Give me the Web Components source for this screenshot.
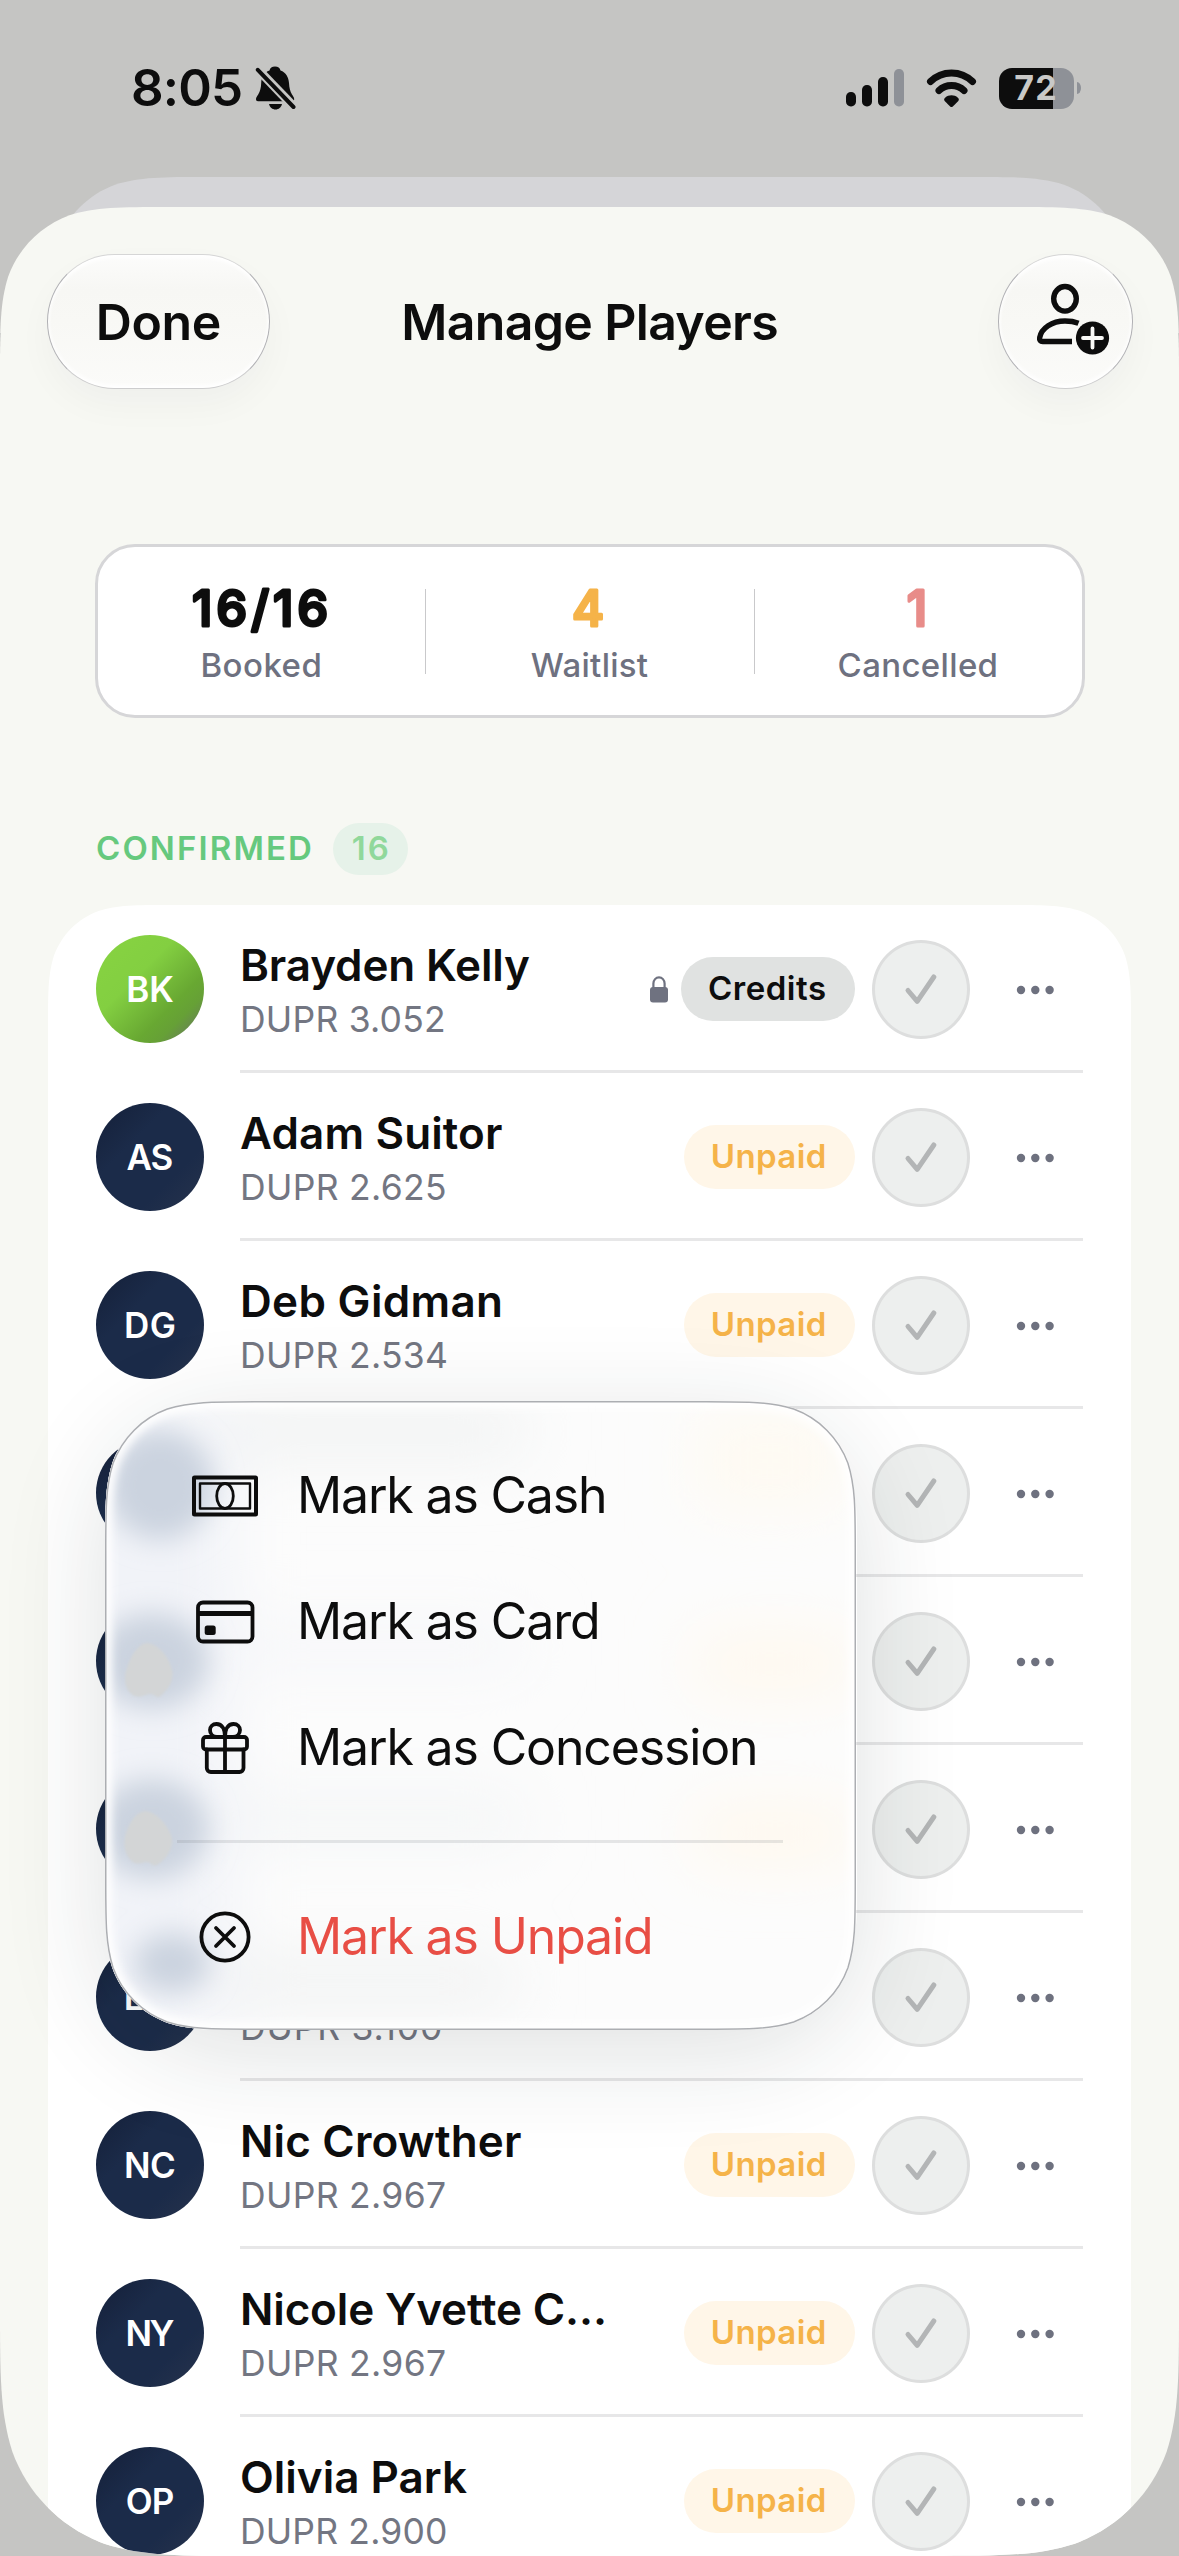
<!DOCTYPE html>
<html lang="en">
<head>
<meta charset="utf-8">
<title>Manage Players</title>
<style>
  html, body { margin: 0; height: 100%; }
  body { width: 1179px; height: 2556px; overflow: hidden; background: #c5c5c3; color: #0d0d0d; font-family: Inter, "Liberation Sans", sans-serif; }
</style>
</head>
<body>
<manage-players-screen></manage-players-screen>

<script>
/* Builds a continuous-curvature rounded rectangle path: rt = top radius, rb = bottom radius. */
function squircle(x, y, w, h, rt, rb = rt) {
  const a = 1.5286, b = 1.0885, c = .8684, d = .6315, e = .0749, f = .3728, g = .1691;
  const X = x + w, Y = y + h;
  const p = (u, v) => u.toFixed(2) + ' ' + v.toFixed(2);
  const corner = (m) => `C ${m(b,0)} ${m(c,0)} ${m(d,e)} C ${m(f,g)} ${m(g,f)} ${m(e,d)} C ${m(0,c)} ${m(0,b)} ${m(0,a)}`;
  const back = (m) => `C ${m(0,b)} ${m(0,c)} ${m(e,d)} C ${m(g,f)} ${m(f,g)} ${m(d,e)} C ${m(c,0)} ${m(b,0)} ${m(a,0)}`;
  const tl = (u, v) => p(x + u * rt, y + v * rt), tr = (u, v) => p(X - u * rt, y + v * rt);
  const bl = (u, v) => p(x + u * rb, Y - v * rb), br = (u, v) => p(X - u * rb, Y - v * rb);
  return `M ${tl(0,a)} ${back(tl)} L ${tr(a,0)} ${corner(tr)} L ${br(0,a)} ${back(br)} L ${bl(a,0)} ${corner(bl)} Z`;
}

class BaseElement extends HTMLElement {
  connectedCallback() {
    if (this.shadowRoot) return;
    this.attachShadow({ mode: 'open' }).innerHTML = this.render();
    this.ready();
  }
  ready() {}
}

/* One line of text whose tracking is adjusted to a given ink width. */
class FitText extends BaseElement {
  render() {
    return `<style>:host{display:block;white-space:nowrap;line-height:1.2}span{display:inline-block}</style><span><slot></slot></span>`;
  }
  ready() {
    const want = +this.getAttribute('w'), text = this.textContent;
    if (!want || text.length < 2) return;
    const cs = getComputedStyle(this), ctx = document.createElement('canvas').getContext('2d');
    ctx.font = `${cs.fontWeight} ${cs.fontSize} ${cs.fontFamily}`;
    const m = ctx.measureText(text);
    const ls = (want - (m.actualBoundingBoxLeft + m.actualBoundingBoxRight)) / (text.length - 1);
    const span = this.shadowRoot.querySelector('span');
    span.style.letterSpacing = ls.toFixed(3) + 'px';
    span.style.marginRight = (-ls).toFixed(3) + 'px';
  }
}
customElements.define('fit-text', FitText);

class StatusBar extends BaseElement {
  render() {
    return `<style>
      :host{display:flex;height:176px;align-items:center;justify-content:space-between;padding:0 98px 0 131px}
      .l,.r{display:flex;align-items:center}
      fit-text{font-size:51px;font-weight:600}
      .l svg{margin-left:12px}
      .r svg{display:block}
      .bars{margin-right:22px}.wifi{margin-right:22px}
      .bat{display:flex;align-items:center}
      .cell{width:75px;height:41px;border-radius:13px;background:linear-gradient(90deg,#0d0d0d 54.5px,#8e9197 54.5px);display:flex;align-items:center;justify-content:center;color:#c9c9c7}
      .cell fit-text{font-size:34px;font-weight:700;margin-left:-2px}
      .nub{width:4px;height:12px;margin-left:3px;border-radius:0 4px 4px 0/0 6px 6px 0;background:#8e9197}
    </style>
    <div class="l"><fit-text w="108">8:05</fit-text>
      <svg width="41" height="44" viewBox="0 0 41 44">
        <path d="M20 .5c3 0 5 1.600 5.500 4C31 6.500 33.500 11 34 17c.3 5 1 8 3 11.500 1.200 2 2.200 3 2.200 4.700 0 1.300-.8 2-2 2H3c-1.300 0-2-.7-2-2 0-1.700 1-2.700 2.200-4.700C5.200 25 6 22 6.200 17 6.500 11 9 6.500 14.500 4.500 15 2 17 .5 20 .5Z" fill="#0d0d0d"/>
        <path d="M14 38h13c-.8 3.400-3.300 5.500-6.500 5.500S14.800 41.400 14 38Z" fill="#0d0d0d"/>
        <path d="M3 3.500 39 41" stroke="#c5c5c3" stroke-width="9"/>
        <path d="M2.800 3.800 38.500 41" stroke="#0d0d0d" stroke-width="4" stroke-linecap="round"/>
      </svg></div>
    <div class="r">
      <svg class="bars" width="58" height="38" viewBox="0 0 58 38"><rect x="0" y="23" width="10" height="14.500" rx="4.800" fill="#0d0d0d"/><rect x="16" y="16" width="10" height="21.500" rx="4.800" fill="#0d0d0d"/><rect x="32" y="8" width="10" height="29.500" rx="4.800" fill="#0d0d0d"/><rect x="48" y="0" width="10" height="37.500" rx="4.800" fill="#8e9197"/></svg>
      <svg class="wifi" width="51" height="38" viewBox="0 0 51 38"><g fill="none" stroke="#0d0d0d" stroke-width="7" stroke-linecap="round"><path d="M4.500 12.500C16 1 35 1 46.500 12.500"/><path d="M13 21.500c7-6.700 18-6.700 25 0"/></g><path d="M25.500 38c-.8 0-1.200-.4-6.600-5.800-1.200-1.200-.9-2.600.2-3.500 3.700-3.200 9.100-3.200 12.800 0 1.100.9 1.400 2.300.2 3.500-5.400 5.400-5.800 5.800-6.600 5.800Z" fill="#0d0d0d"/></svg>
      <div class="bat"><div class="cell"><fit-text w="40">72</fit-text></div><div class="nub"></div></div>
    </div>`;
  }
}
customElements.define('status-bar', StatusBar);

class GlassButton extends BaseElement {
  render() {
    return `<style>
      :host{display:flex;align-items:center;justify-content:center;box-sizing:border-box;height:135px;width:var(--w);border-radius:68px;border:1.500px solid #b0b0b4;border-top-color:#d6d6d6;border-bottom-color:#cdcdce;
        background:linear-gradient(#fcfcfb,#f7f7f4 26%,#f8f8f5 50%,#fbfbf9 100%);box-shadow:inset 0 3px 4px #fff,inset 0 -3px 4px #fff,0 16px 36px rgba(40,40,50,.035)}
    </style><slot></slot>`;
  }
}
customElements.define('glass-button', GlassButton);

class NavBar extends BaseElement {
  render() {
    return `<style>
      :host{display:grid;grid-template-columns:1fr auto 1fr;align-items:center;padding:46px 46px 0 47px;height:136px}
      fit-text{font-size:50px;font-weight:600;margin-top:2px}
      .end{justify-self:end}
    </style>
    <glass-button style="--w:223px"><fit-text w="121">Done</fit-text></glass-button>
    <fit-text w="373">Manage Players</fit-text>
    <glass-button class="end" style="--w:135px">
      <svg width="100" height="100" viewBox="1016 271 100 100">
        <g fill="none" stroke="#0d0d0d" stroke-width="5.400" stroke-linecap="butt" stroke-linejoin="round">
          <ellipse cx="1065" cy="298.800" rx="11.300" ry="12.300"/>
          <path d="M1078.500 323.300C1074 321.500 1069.500 321 1065 321c-13 0-23.500 7-25.300 16.500-.5 2.700.8 4 3 4H1072"/>
        </g>
        <circle cx="1092.500" cy="338" r="16.600" fill="#0d0d0d"/>
        <path d="M1083 338h19M1092.500 328.500v19" stroke="#f9f9f7" stroke-width="3.800" stroke-linecap="round"/>
      </svg>
    </glass-button>`;
  }
}
customElements.define('nav-bar', NavBar);

/* Figure over caption; the figure's outline gives it rounded terminals. */
class StatCell extends BaseElement {
  render() {
    const v = this.getAttribute('value'), c = this.getAttribute('color'), w = this.getAttribute('vw');
    const fit = w ? `textLength="${w}"` : '';
    return `<style>
      :host{display:flex;flex-direction:column;align-items:center;flex:1;padding-top:20px}
      svg{display:block;margin-left:-3px}
      text{font:500 49px Inter,"Liberation Sans",sans-serif}
      fit-text{font-size:33px;font-weight:500;color:#6e7180;line-height:40px;margin:-2px 0 0 -1px}
    </style>
    <svg width="240" height="80" viewBox="0 0 240 80"><text x="120" y="58.500" text-anchor="middle" ${fit} fill="${c}" stroke="${c}" stroke-width="3" stroke-linejoin="round">${v}</text></svg>
    <fit-text w="${this.getAttribute('lw')}">${this.getAttribute('label')}</fit-text>`;
  }
}
customElements.define('stat-cell', StatCell);

class StatsCard extends BaseElement {
  render() {
    return `<style>
      :host{display:flex;align-items:stretch;box-sizing:border-box;height:174px;margin:155px 94px 0 95px;
        background:#fff;border:3px solid #d6d6d8;border-radius:40px}
      i{width:1px;background:#c9c9cb;margin:42px 0 41px}
    </style>
    <stat-cell value="16/16" color="#0d0d0d" vw="136" label="Booked" lw="117"></stat-cell><i></i>
    <stat-cell value="4" color="#f5b349" label="Waitlist" lw="117"></stat-cell><i></i>
    <stat-cell value="1" color="#e88c89" label="Cancelled" lw="157"></stat-cell>`;
  }
}
customElements.define('stats-card', StatsCard);

class SectionHeader extends BaseElement {
  render() {
    return `<style>
      :host{display:flex;align-items:center;height:52px;margin:105px 0 30px 96px;font-size:33px;font-weight:600;color:#66c97e}
      .n{margin-left:21px;width:75px;height:52px;border-radius:26px;background:#e6f2e9;color:#90d89b;display:flex;align-items:center;justify-content:center}
    </style>
    <fit-text w="214">CONFIRMED</fit-text><div class="n"><fit-text w="35">16</fit-text></div>`;
  }
}
customElements.define('section-header', SectionHeader);

class PlayerRow extends BaseElement {
  render() {
    const g = (k) => this.getAttribute(k) || '';
    const pill = g('status');
    const green = this.hasAttribute('green');
    return `<style>
      :host{display:flex;height:168px;padding-left:48px}
      .av{flex:none;width:108px;height:108px;margin:30px 36px 0 0;border-radius:50%;display:flex;align-items:center;justify-content:center;color:#fff;font-size:35px;font-weight:600;
        background:${green ? 'linear-gradient(135deg,#86d241 12%,#83cf41 38%,#68a832 68%,#66a036 78%,#6a6b70 100%)' : 'linear-gradient(135deg,#141f38,#1b2b49 35%,#1b2b49 70%,#27334c)'}}
      .body{flex:1;display:flex;box-sizing:border-box;height:168px;border-bottom:3px solid #e7e7e8;margin-right:48px}
      .who{flex:1;padding:32px 0 0 0}
      .name{font-size:44px;font-weight:600;line-height:56px;height:56px}
      .sub{font-size:35.500px;font-weight:400;color:#737682;line-height:53px;height:53px}
      .acts{display:flex;align-items:center;height:168px}
      .lock{margin-right:13px;display:block}
      .pill{height:64px;box-sizing:border-box;border-radius:32px;display:flex;align-items:center;justify-content:center;font-size:33px;font-weight:600;margin-right:17px}
      .pill fit-text{margin-left:-2px}
      .Credits{width:174px;background:#e0e2e1}
      .Unpaid{width:171px;background:#fff6e8;color:#f5b349}
      .tick{width:98px;height:99px;box-sizing:border-box;border:3px solid #dddede;border-radius:50%;background:#edefee;display:flex;align-items:center;justify-content:center}
      .more{display:block;margin:2px 29px 0 46px}
    </style>
    <div class="av">${g('initials') ? `<fit-text w="${g('iw')}">${g('initials')}</fit-text>` : ''}</div>
    <div class="body">
      <div class="who">
        <div class="name">${g('name') ? `<fit-text style="line-height:56px" w="${g('nw')}">${g('name')}</fit-text>` : ''}</div>
        <div class="sub">${g('rating') ? `<fit-text style="line-height:53px" w="${g('rw') || 202}">DUPR ${g('rating')}</fit-text>` : ''}</div>
      </div>
      <div class="acts">
        ${pill === 'Credits' ? `<svg class="lock" width="18" height="27" viewBox="0 0 18 27"><rect x="0" y="11" width="18" height="15.500" rx="3" fill="#6f7280"/><path d="M3.400 12V7.500a5.600 6.200 0 0 1 11.200 0V12" fill="none" stroke="#6f7280" stroke-width="2.200"/></svg>` : ''}
        ${pill ? `<div class="pill ${pill}"><fit-text w="${pill === 'Credits' ? 116 : 112}">${pill}</fit-text></div>` : ''}
        <div class="tick"><svg width="40" height="40" viewBox="0 0 40 40"><path d="M7 21.500 16.200 32.300 32.800 8" fill="none" stroke="#b3b5b6" stroke-width="5" stroke-linecap="round" stroke-linejoin="round"/></svg></div>
        <svg class="more" width="38" height="10" viewBox="0 0 38 10" fill="#6e717f"><circle cx="5" cy="5" r="4.200"/><circle cx="19.300" cy="5" r="4.200"/><circle cx="33.600" cy="5" r="4.200"/></svg>
      </div>
    </div>`;
  }
}
customElements.define('player-row', PlayerRow);

class PlayerList extends BaseElement {
  render() {
    return `<style>
      :host{display:block;margin:0 48px;height:1651px;background:#fff;clip-path:path('${squircle(0, 0, 1083, 1800, 80)}')}
    </style><slot></slot>`;
  }
}
customElements.define('player-list', PlayerList);

class MenuItem extends BaseElement {
  render() {
    return `<style>
      :host{display:flex;align-items:center;height:126px;padding-left:80px;font-size:50px;font-weight:400}
      svg{display:block;margin-right:32px}
      fit-text{margin-top:-2px}
    </style>
    <svg width="80" height="80" viewBox="0 0 80 80" fill="none" stroke="#0d0d0d" stroke-width="4" stroke-linecap="round" stroke-linejoin="round">${MenuItem.icons[this.getAttribute('icon')]}</svg>
    <fit-text w="${this.getAttribute('w')}">${this.getAttribute('label')}</fit-text>`;
  }
}
MenuItem.icons = {
  cash: '<rect x="9" y="21.500" width="62" height="37" rx=".5"/><rect x="15" y="27.500" width="50" height="25" stroke-width="2.400"/><ellipse cx="40" cy="40" rx="8.300" ry="12.500" stroke-width="2.800"/>',
  card: '<rect x="13" y="20.500" width="54.500" height="39" rx="5" stroke-width="3.800"/><path d="M13 31.500h54.500" stroke-width="5" stroke-linecap="butt"/><rect x="19.700" y="43.500" width="11" height="9.500" rx="2.500" fill="#0d0d0d" stroke="none"/>',
  gift: '<g stroke-width="3.800"><rect x="18" y="29" width="44" height="12.500" rx="3"/><path d="M21.800 41.500V60a4 4 0 0 0 4 4H54.500a4 4 0 0 0 4-4V41.500M40 25v39"/><path d="M40 29c0-8-3-13-8.500-13-4 0-6.500 2.800-6.500 6 0 4 3 7 7 7M40 29c0-8 3-13 8.500-13 4 0 6.500 2.800 6.500 6 0 4-3 7-7 7"/></g>',
  cross: '<circle cx="40" cy="40" r="23.600" stroke-width="3.800"/><path d="M31 31l18 18M49 31 31 49" stroke-width="3.800"/>'
};
customElements.define('menu-item', MenuItem);

/* Frosted popover; soft ellipses stand for the avatars and pills diffused by the glass. */
class ContextMenu extends BaseElement {
  render() {
    const path = squircle(0, 0, 751, 629, 98), rim = squircle(.75, .75, 749.5, 627.5, 97.5);
    return `<style>
      :host{display:grid;width:752px;height:629px}
      :host>*{grid-area:1/1}
      .shadow{border-radius:120px;box-shadow:0 22px 105px rgba(25,45,40,.14)}
      svg{display:block}
      .items{padding-top:32px;position:relative}
      hr{border:0;height:3px;background:rgba(120,125,135,.18);margin:29px 74px 31px 72px}
    </style>
    <div class="shadow"></div>
    <svg width="752" height="629" viewBox="0 0 752 629">
      <defs><clipPath id="c"><path d="${path}"/></clipPath>
      <filter id="b" x="-60%" y="-60%" width="220%" height="220%"><feGaussianBlur stdDeviation="14"/></filter>
      <filter id="w" filterUnits="userSpaceOnUse" x="-150" y="-100" width="1000" height="830"><feGaussianBlur stdDeviation="32"/></filter>
      <filter id="s"><feGaussianBlur stdDeviation="1.200"/></filter>
      <filter id="r"><feGaussianBlur stdDeviation="4"/></filter></defs>
      <g clip-path="url(#c)">
        <rect width="752" height="629" fill="#fcfcfc"/>
        <g filter="url(#w)"><rect x="-40" y="0" width="165" height="629" fill="#f1f3f8"/>
          <rect x="120" y="5" width="300" height="50" fill="#f0f2f2"/><rect x="130" y="220" width="290" height="50" fill="#f6f7f9"/><rect x="130" y="395" width="290" height="45" fill="#f3f5f6"/><rect x="120" y="560" width="290" height="40" fill="#eef0f0"/>
          <rect x="590" y="10" width="150" height="100" fill="#fefaf2"/><rect x="590" y="235" width="160" height="56" fill="#fff8ec"/><rect x="590" y="405" width="160" height="56" fill="#fff8ec"/></g>
        <g filter="url(#b)" fill="#cbd3df"><ellipse cx="55" cy="84" rx="54" ry="55"/><ellipse cx="47" cy="260" rx="57" ry="48"/><ellipse cx="47" cy="428" rx="57" ry="50"/><ellipse cx="67" cy="562" rx="38" ry="30"/></g>
        <g filter="url(#s)" fill="#d3d5d6"><path d="M43 242c11 2 21 14 24 27 2 10-3 20-13 27-3 1-6-4-10-3-5 1-9 4-14 2-10-4-12-18-8-28 4-12 11-25 21-25Z"/><path d="M41 410c11 2 20 12 25 24 4 11-4 24-14 30-4 2-7-4-11-3-5 1-9 3-13 0-9-6-10-20-7-29 4-11 10-22 20-22Z"/></g>
        <path d="${rim}" fill="none" stroke="#fff" stroke-width="12" filter="url(#r)"/>
      </g>
      <path d="${rim}" fill="none" stroke="#acaeb2" stroke-width="1.500"/>
    </svg>
    <div class="items"><slot></slot><hr><slot name="danger"></slot></div>`;
  }
}
customElements.define('context-menu', ContextMenu);

class ManagePlayersScreen extends BaseElement {
  render() {
    return `<style>
      :host{display:block;position:relative;width:1179px;height:2556px;overflow:hidden;background:#c5c5c3}
      .back{position:absolute;inset:0}
      .edge{position:absolute;left:0;top:333px;width:1179px;height:60px;background:linear-gradient(#77787b,#b8b8bc)}
      .sheet{position:relative;margin-top:31px;height:2349px;background:#f7f8f3;clip-path:path('${squircle(0, 0, 1179, 2349, 110, 165)}')}
      status-bar{position:relative}
      context-menu{position:absolute;left:105px;top:1194px}
    </style>
    <div class="edge"></div>
    <svg class="back" width="1179" height="400"><path d="${squircle(50, 177, 1079, 600, 103)}" fill="#d5d5d8"/></svg>
    <status-bar></status-bar>
    <div class="sheet">
      <nav-bar></nav-bar>
      <stats-card></stats-card>
      <section-header></section-header>
      <player-list>
        <player-row green initials="BK" iw="45" name="Brayden Kelly" nw="287" rating="3.052" rw="201" status="Credits"></player-row>
        <player-row initials="AS" iw="46" name="Adam Suitor" nw="261" rating="2.625" status="Unpaid"></player-row>
        <player-row initials="DG" iw="49" name="Deb Gidman" nw="257" rating="2.534" rw="203" status="Unpaid"></player-row>
        <player-row></player-row>
        <player-row></player-row>
        <player-row></player-row>
        <player-row initials="LM" iw="48" rating="3.100" rw="198"></player-row>
        <player-row initials="NC" iw="49" name="Nic Crowther" nw="278" rating="2.967" status="Unpaid"></player-row>
        <player-row initials="NY" iw="47" name="Nicole Yvette C…" nw="361" rating="2.967" status="Unpaid"></player-row>
        <player-row initials="OP" iw="47" name="Olivia Park" nw="225" rating="2.900" rw="203" status="Unpaid"></player-row>
      </player-list>
      <context-menu>
        <menu-item icon="cash" label="Mark as Cash" w="303"></menu-item>
        <menu-item icon="card" label="Mark as Card" w="296"></menu-item>
        <menu-item icon="gift" label="Mark as Concession" w="454"></menu-item>
        <menu-item slot="danger" icon="cross" label="Mark as Unpaid" w="349" style="color:#e84e45"></menu-item>
      </context-menu>
    </div>`;
  }
}
customElements.define('manage-players-screen', ManagePlayersScreen);
</script>
</body>
</html>
